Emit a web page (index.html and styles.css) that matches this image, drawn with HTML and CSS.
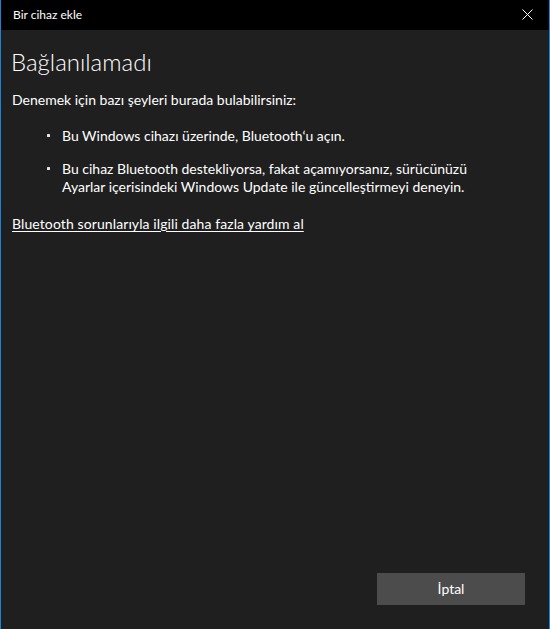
FILE: index.html
```html
<!DOCTYPE html>
<html lang="tr">
<head>
<meta charset="utf-8">
<title>Bir cihaz ekle</title>
<link rel="stylesheet" href="styles.css">
</head>
<body>
<div class="window">
  <header class="titlebar">
    <span class="titlebar-text">Bir cihaz ekle</span>
    <button class="close-btn" aria-label="Kapat">
      <svg width="11" height="11" viewBox="0 0 11 11"><path d="M0.5 0.5 L10.5 10.5 M10.5 0.5 L0.5 10.5" stroke="#fff" stroke-width="1" fill="none"/></svg>
    </button>
  </header>
  <main class="content">
    <h1 class="heading">Bağlanılamadı</h1>
    <p class="intro">Denemek için bazı şeyleri burada bulabilirsiniz:</p>
    <ul class="tips">
      <li class="tip"><span class="dot"></span><span class="tip-text">Bu Windows cihazı üzerinde, Bluetooth‘u açın.</span></li>
      <li class="tip"><span class="dot"></span><span class="tip-text">Bu cihaz Bluetooth destekliyorsa, fakat açamıyorsanız, sürücünüzü<br>Ayarlar içerisindeki Windows Update ile güncelleştirmeyi deneyin.</span></li>
    </ul>
    <a class="help-link" href="#">Bluetooth sorunlarıyla ilgili daha fazla yardım al</a>
  </main>
  <footer class="footer">
    <button class="cancel-btn">İptal</button>
  </footer>
</div>
</body>
</html>
```
FILE: styles.css
```css
* { box-sizing: border-box; }
html, body { margin: 0; padding: 0; }
body {
  width: 550px;
  height: 629px;
  overflow: hidden;
  background: #1f1f1f;
  font-family: "Lato", "Open Sans", sans-serif;
  color: #ffffff;
}
.window {
  height: 629px;
  display: flex;
  flex-direction: column;
  border-left: 1px solid #1883d7;
  border-right: 1px solid #1883d7;
  background: #1f1f1f;
}
.titlebar {
  height: 30px;
  flex: none;
  background: #000000;
  display: flex;
  align-items: center;
  justify-content: space-between;
  padding-left: 12px;
}
.titlebar-text {
  font-size: 12px;
  line-height: 14px;
  color: #ffffff;
  margin-top: -1px;
}
.close-btn {
  width: 46px;
  height: 30px;
  background: transparent;
  border: 0;
  padding: 0;
  display: flex;
  align-items: center;
  justify-content: center;
  padding-left: 2px;
  padding-bottom: 1px;
}
.close-btn svg { display: block; }
.content {
  flex: 1;
  padding: 18px 11px 0 11px;
  display: flex;
  flex-direction: column;
  align-items: flex-start;
}
.heading {
  margin: 0;
  font-size: 24px;
  font-weight: 300;
  line-height: 28px;
  margin-left: -1px;
}
.intro {
  margin: 15px 0 0 0;
  font-size: 14px;
  line-height: 18px;
}
.tips {
  list-style: none;
  margin: 18px 0 0 0;
  padding: 0 0 0 35px;
  display: flex;
  flex-direction: column;
  gap: 15px;
}
.tip {
  display: flex;
  align-items: flex-start;
  font-size: 14px;
  line-height: 18px;
}
.dot {
  flex: none;
  width: 3px;
  height: 3px;
  background: #e6e6e6;
  border-radius: 0.5px;
  margin-top: 7px;
  margin-right: 12px;
}
.help-link {
  margin-top: 19px;
  font-size: 14px;
  line-height: 18px;
  letter-spacing: 0.1px;
  color: #ffffff;
  text-decoration: underline;
  text-underline-offset: 2px;
}
.footer {
  flex: none;
  display: flex;
  justify-content: flex-end;
  padding: 0 24px 24px 0;
}
.cancel-btn {
  width: 148px;
  height: 32px;
  background: #4c4c4c;
  border: 0;
  color: #ffffff;
  font-family: "Lato", "Open Sans", sans-serif;
  font-size: 14px;
  padding: 0 0 1px 0;
}
```
